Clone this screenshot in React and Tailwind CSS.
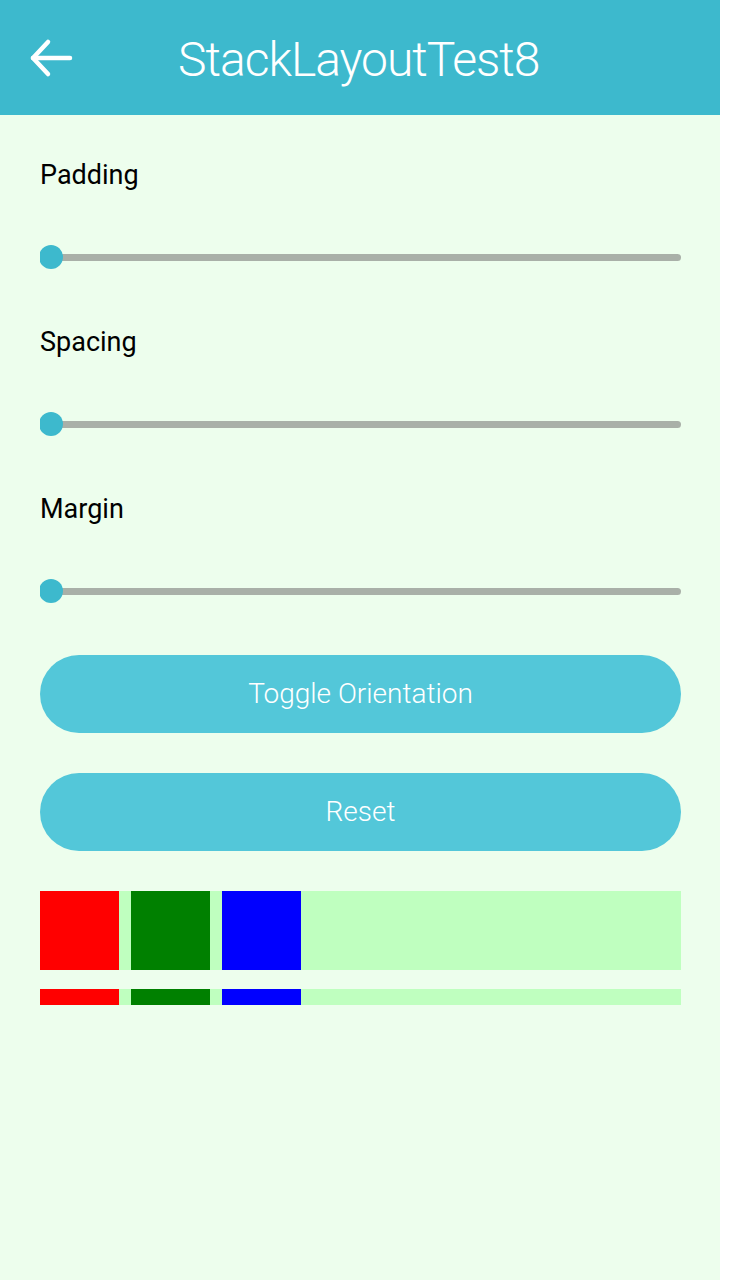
import React from 'react';

function Slider() {
  return (
    <div className="relative h-11 mt-10 flex items-center overflow-hidden">
      <div className="w-full h-[7px] rounded-full bg-[#a9b0a8]"></div>
      <div className="absolute left-[-1px] top-1/2 -translate-y-1/2 w-6 h-6 rounded-full bg-[#3db9cd]"></div>
    </div>
  );
}

function Section({ label, first }) {
  return (
    <div className={first ? '' : 'mt-[47px]'}>
      <div className="h-9 flex items-center text-[27px] text-black pb-1">{label}</div>
      <Slider />
    </div>
  );
}

function Row({ height }) {
  return (
    <div className={`flex gap-3 bg-[#bfffbf] ${height}`}>
      <div className="w-[79px] bg-[#ff0000]"></div>
      <div className="w-[79px] bg-[#008000]"></div>
      <div className="w-[79px] bg-[#0000ff]"></div>
    </div>
  );
}

export default function App() {
  return (
    <div className="w-[736px] h-[1280px] bg-white" style={{ fontFamily: 'Roboto, "Liberation Sans", sans-serif' }}>
      <div className="w-[720px] h-full bg-[#edfeed] flex flex-col">
        {/* Header */}
        <div className="h-[115px] shrink-0 bg-[#3db9cd] flex items-center">
          <div className="w-[178px] pl-[28px] flex items-center">
            <svg width="48" height="40" viewBox="0 0 48 40" fill="none" stroke="white" strokeWidth="4.5" strokeLinecap="round" strokeLinejoin="round">
              <path d="M5 20H42" />
              <path d="M20 4L5 20L20 36" />
            </svg>
          </div>
          <h1 className="text-[48px] font-light text-white tracking-[-1px] leading-none pt-1">StackLayoutTest8</h1>
        </div>

        {/* Body */}
        <div className="pl-10 pr-[39px] pt-[44px] flex flex-col">
          <Section label="Padding" first />
          <Section label="Spacing" />
          <Section label="Margin" />

          <button className="mt-[42px] h-[78px] rounded-full bg-[#53c7d9] text-white text-[28px] font-light">
            Toggle Orientation
          </button>
          <button className="mt-10 h-[78px] rounded-full bg-[#53c7d9] text-white text-[28px] font-light">
            Reset
          </button>

          <div className="mt-10">
            <Row height="h-[79px]" />
          </div>
          <div className="mt-[19px]">
            <Row height="h-4" />
          </div>
        </div>
      </div>
    </div>
  );
}
